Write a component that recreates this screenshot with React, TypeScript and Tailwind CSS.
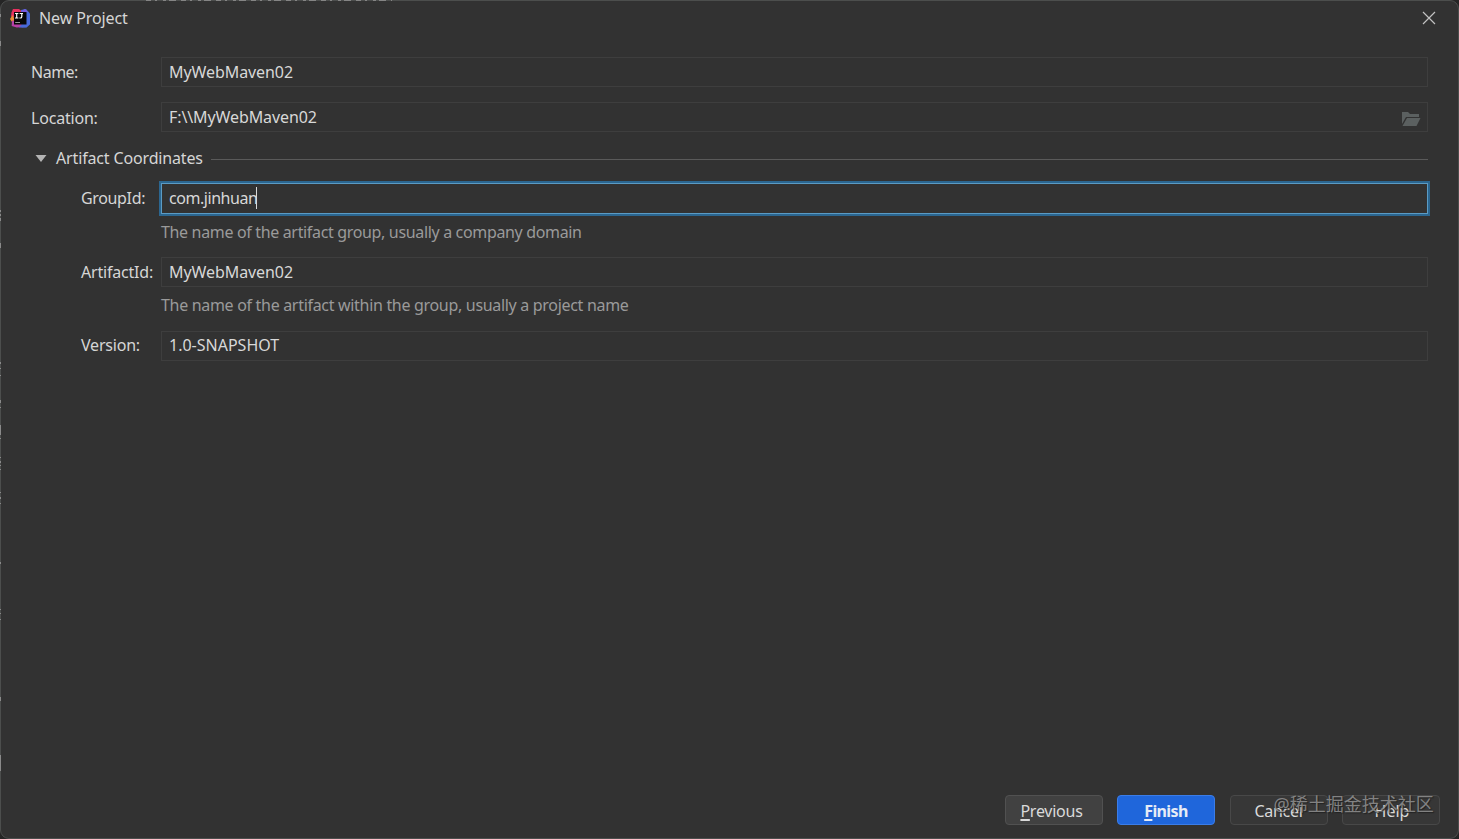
import React, { useState } from "react";
import clsx from "clsx";

interface FieldProps {
  id: string;
  label: string;
  value: string;
  onChange: (value: string) => void;
  nested?: boolean;
  focused?: boolean;
  className?: string;
  labelClass?: string;
  textClass?: string;
  children?: React.ReactNode;
}

// One label + text box row of the wizard form.
function Field({ id, label, value, onChange, nested, focused, className, labelClass, textClass, children }: FieldProps) {
  return (
    <div className={clsx("flex items-center", focused ? "h-[31px]" : "h-[30px]", className)}>
      <label
        htmlFor={id}
        className={clsx("shrink-0 whitespace-nowrap text-[#d6d6d6]", nested ? "ml-[50px] w-20" : "w-[130px]", labelClass)}
      >
        {label}
      </label>
      <div
        className={clsx(
          "flex h-full flex-1 items-center border px-[7px]",
          focused ? "border-[#5b9bc4] ring-2 ring-[#2b6690]" : "border-[#3e3e3e]"
        )}
      >
        {focused ? (
          <span className={clsx("flex items-center whitespace-nowrap text-[#d8d8d8]", textClass)}>
            {value}
            <span className="-ml-px h-[22px] w-px bg-[#d8d8d8]" />
          </span>
        ) : (
          <input
            id={id}
            value={value}
            onChange={(e) => onChange(e.target.value)}
            spellCheck={false}
            className={clsx("min-w-0 flex-1 bg-transparent text-[#d8d8d8] outline-none", textClass)}
          />
        )}
        {children}
      </div>
    </div>
  );
}

function IdeaLogo() {
  return (
    <svg width="22" height="22" viewBox="0 0 22 22">
      <path d="M2.500 5.500 4 2h6l3 2.500-7 6-4-1z" fill="#e8305f" />
      <path d="M12 3 17 2l4 4.500V17l-3.500 3.500h-5z" fill="#4869d8" />
      <path d="M12 4 16 2l3 3-5 2z" fill="#7a5be0" />
      <path d="M3.500 8 1 12l2 3 3-2z" fill="#ee8a35" />
      <path d="m3 13.500-.3 5.500 5 1.500 8-.6-5-5z" fill="#b63fa6" />
      <path d="m10 20.500 7.500-.3 3.500-3-4-5z" fill="#4869d8" />
      <rect x="5" y="5" width="12.500" height="12.500" fill="#080808" />
      <path d="M6 6.500h3.400M7.700 6.500v4.500M6 11h3.400M10.600 6.500h3.400M12.800 6.500v2.900q0 1.600-1.500 1.600h-.9" stroke="#fff" strokeWidth="1.200" fill="none" />
      <path d="M6.200 15.500h4.800" stroke="#bbb" strokeWidth="0.800" />
    </svg>
  );
}

function FolderIcon() {
  return (
    <svg width="20" height="16" viewBox="0 0 20 16" className="-mr-px mt-[3px]" fill="#5b6060">
      <path d="M1 1h6l2 2h9v3H5L1 13z" />
      <path d="M6 7h13.500L15.500 15H1.500z" />
    </svg>
  );
}

const buttonClass = "flex h-[30px] w-[98px] items-center justify-center rounded-[4px] border pt-px";
const ghostClass = "border-[#484848] bg-[#373737] text-[#dadada]";
const mnemonicClass = "underline decoration-2 underline-offset-[1.500px] [text-decoration-skip-ink:none]";
const hintClass = "ml-[130px] flex h-5 items-center whitespace-nowrap text-[#9a9a9a]";

// Vertical position and height of the window showing past the left border.
const slivers = [
  [14, 3], [41, 5], [210, 2], [214, 2], [218, 3], [243, 5], [362, 2], [368, 1], [375, 1],
  [400, 3], [407, 1], [425, 10], [438, 1], [457, 1], [461, 2], [465, 1], [469, 1],
  [492, 1], [497, 2], [503, 1], [562, 2], [609, 1], [613, 1], [619, 1], [697, 4], [755, 16]
];

export default function App() {
  const [name, setName] = useState("MyWebMaven02");
  const [location, setLocation] = useState("F:\\\\MyWebMaven02");
  const [groupId, setGroupId] = useState("com.jinhuan");
  const [artifactId, setArtifactId] = useState("MyWebMaven02");
  const [version, setVersion] = useState("1.0-SNAPSHOT");

  return (
    <div className="relative h-[839px] w-[1459px] overflow-hidden bg-[#252525] font-['Noto_Sans','Noto_Sans_CJK_SC',sans-serif] text-[16px] leading-5">
      <div className="flex h-full flex-col rounded-[9px] border border-[#4c4e4d] bg-[#323232]">
        <header className="flex h-[34px] shrink-0 items-center pr-[22px] pl-2">
          <IdeaLogo />
          <h1 className="ml-2 flex-1 tracking-[-0.1px] text-[#d6d6d6]">New Project</h1>
          <button type="button" aria-label="Close">
            <svg width="14" height="14" viewBox="0 0 14 14" stroke="#c2c2c2" strokeWidth="1.200">
              <path d="m1 1 12 12M13 1 1 13" />
            </svg>
          </button>
        </header>

        <main className="flex-1 pt-[22px] pr-[30px] pl-[30px]">
          <Field id="name" label="Name:" value={name} onChange={setName} labelClass="tracking-[-0.500px]" textClass="tracking-[-0.080px]" />
          <Field
            id="location"
            label="Location:"
            value={location}
            onChange={setLocation}
            className="mt-[15px]"
            labelClass="pt-0.5 tracking-[-0.2px]"
            textClass="tracking-[-0.100px]"
          >
            <FolderIcon />
          </Field>

          <div className="mt-4 flex h-5 items-center">
            <svg width="12" height="7" viewBox="0 0 12 7" className="ml-1" fill="#b4b4b4">
              <path d="M.5 0h11L6 7z" />
            </svg>
            <h2 className="ml-[9px] whitespace-nowrap tracking-[-0.150px] text-[#d6d6d6]">Artifact Coordinates</h2>
            <div className="mt-[3px] ml-2 h-px flex-1 bg-[#5a5a5a]" />
          </div>

          <Field
            id="group-id"
            label="GroupId:"
            value={groupId}
            onChange={setGroupId}
            nested
            focused
            className="mt-[15px]"
            labelClass="pb-px tracking-[-0.350px]"
            textClass="pb-px tracking-[-0.450px]"
          />
          <p className={clsx(hintClass, "mt-2 tracking-[-0.340px]")}>The name of the artifact group, usually a company domain</p>
          <Field
            id="artifact-id"
            label="ArtifactId:"
            value={artifactId}
            onChange={setArtifactId}
            nested
            className="mt-[15px]"
            labelClass="tracking-[-0.200px]"
            textClass="tracking-[-0.080px]"
          />
          <p className={clsx(hintClass, "mt-2 tracking-[-0.310px]")}>The name of the artifact within the group, usually a project name</p>
          <Field
            id="version"
            label="Version:"
            value={version}
            onChange={setVersion}
            nested
            className="mt-4"
            labelClass="pb-0.5 tracking-[-0.200px]"
            textClass="pb-0.5"
          />
        </main>

        <footer className="flex justify-end gap-[14.500px] pr-[18px] pb-[13px]">
          <button type="button" className={clsx(buttonClass, "border-[#515151] bg-[#414141] pr-1 tracking-[-0.250px] text-[#dadada]")}>
            <span className={mnemonicClass}>P</span>revious
          </button>
          <button type="button" className={clsx(buttonClass, "border-[#3b7de8] bg-[#1f66db] font-bold tracking-[-0.600px] text-[#e6ecf6]")}>
            <span className={mnemonicClass}>F</span>inish
          </button>
          <button type="button" className={clsx(buttonClass, ghostClass, "tracking-[-0.300px]")}>Cancel</button>
          <button type="button" className={clsx(buttonClass, ghostClass, "pl-0.5")}>Help</button>
        </footer>
      </div>

      {slivers.map(([top, height]) => (
        <div key={top} className="absolute left-0 w-px bg-[#8a8a8a]" style={{ top, height }} />
      ))}
      <svg className="absolute top-0 left-[146px]" width="246" height="2" stroke="#858585">
        <path d="M0 .5h246" strokeDasharray="5 4 2 6 3 3 7 5" />
      </svg>

      <div className="pointer-events-none absolute top-[792px] left-[1273.500px] text-[18px] leading-6 whitespace-nowrap text-[#9a9a9a]/80 [text-shadow:1px_1px_1px_#222]">
        @稀土掘金技术社区
      </div>
    </div>
  );
}
